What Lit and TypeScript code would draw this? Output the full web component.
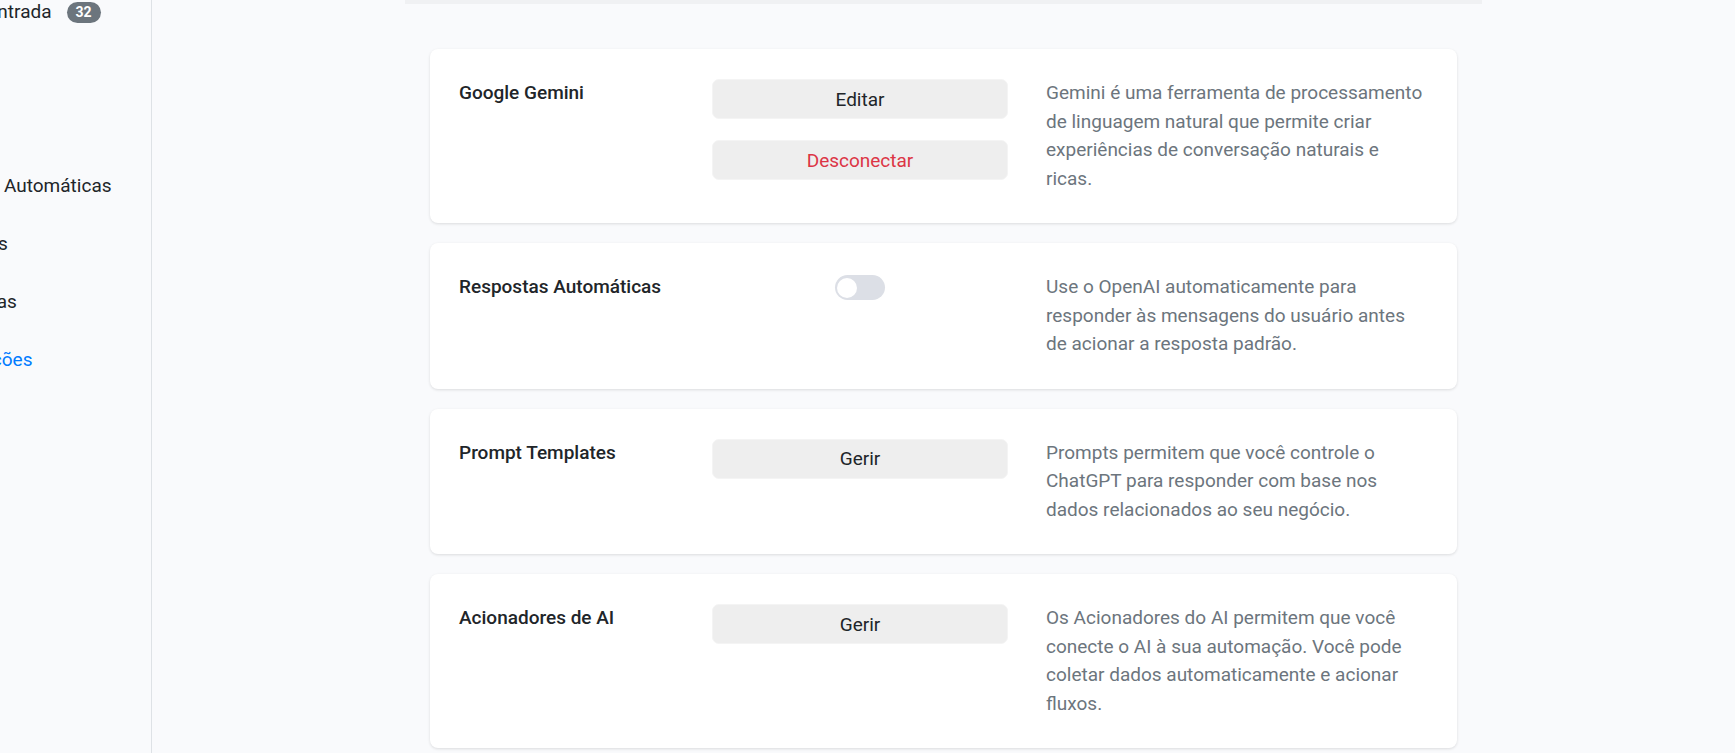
import { LitElement, html, css, nothing } from "lit";
import { customElement, property, state } from "lit/decorators.js";
import { classMap } from "lit/directives/class-map.js";

interface NavItem {
  label: string;
  badge?: number;
  active?: boolean;
}

interface Action {
  label: string;
  danger?: boolean;
}

interface Setting {
  title: string;
  text: string;
  actions?: Action[];
}

const NAV: NavItem[] = [
  { label: "Caixa de entrada", badge: 32 },
  { label: "" },
  { label: "" },
  { label: "Respostas Automáticas" },
  { label: "Sequências" },
  { label: "Ferramentas" },
  { label: "Configurações", active: true },
];

const SETTINGS: Setting[] = [
  {
    title: "Google Gemini",
    text: "Gemini é uma ferramenta de processamento de linguagem natural que permite criar experiências de conversação naturais e ricas.",
    actions: [{ label: "Editar" }, { label: "Desconectar", danger: true }],
  },
  {
    title: "Respostas Automáticas",
    text: "Use o OpenAI automaticamente para responder às mensagens do usuário antes de acionar a resposta padrão.",
  },
  {
    title: "Prompt Templates",
    text: "Prompts permitem que você controle o ChatGPT para responder com base nos dados relacionados ao seu negócio.",
    actions: [{ label: "Gerir" }],
  },
  {
    title: "Acionadores de AI",
    text: "Os Acionadores do AI permitem que você conecte o AI à sua automação. Você pode coletar dados automaticamente e acionar fluxos.",
    actions: [{ label: "Gerir" }],
  },
];

@customElement("setting-card")
export class SettingCard extends LitElement {
  @property({ attribute: false }) setting!: Setting;
  @state() private on = false;

  static styles = css`
    :host {
      display: block;
    }
    .card {
      display: grid;
      grid-template-columns: 215fr 296fr 382fr;
      column-gap: 38px;
      padding: 30px 29px;
      background: #fff;
      border-radius: 8px;
      box-shadow: 0 1px 3px rgba(0, 0, 0, 0.12);
    }
    .title,
    .text {
      margin: 0;
      font-size: inherit;
      line-height: inherit;
    }
    .title {
      font-weight: 500;
      color: #212529;
    }
    .text {
      color: #6c757d;
    }
    .actions {
      display: flex;
      flex-direction: column;
      gap: 21px;
    }
    .button {
      height: 40px;
      padding: 0 12px;
      border: 1px solid #f4f4f4;
      border-radius: 7px;
      background: #eee;
      color: #212529;
      font: inherit;
      line-height: 1;
      cursor: pointer;
    }
    .danger {
      color: #dc3545;
    }
    .switch {
      appearance: none;
      display: flex;
      align-items: center;
      align-self: center;
      width: 50px;
      height: 25px;
      margin: 2px 0;
      padding: 0 2px;
      border-radius: 13px;
      background: #dcdfe6;
      cursor: pointer;
    }
    .switch::before {
      content: "";
      width: 20px;
      height: 20px;
      border-radius: 50%;
      background: #fff;
    }
    .switch:checked {
      justify-content: flex-end;
      background: #007bff;
    }
  `;

  render() {
    const { title, text, actions } = this.setting;
    return html`
      <section class="card">
        <h2 class="title" id="title">${title}</h2>
        <div class="actions">
          ${actions
            ? actions.map(
                (a) => html`<button type="button" class=${classMap({ button: true, danger: !!a.danger })}>${a.label}</button>`
              )
            : html`<input
                class="switch"
                type="checkbox"
                role="switch"
                aria-labelledby="title"
                .checked=${this.on}
                @change=${(e: Event) => (this.on = (e.target as HTMLInputElement).checked)}
              />`}
        </div>
        <p class="text">${text}</p>
      </section>
    `;
  }
}

@customElement("app-root")
export class AppRoot extends LitElement {
  static styles = css`
    :host {
      display: flex;
      height: 100vh;
      overflow: hidden;
      background: #f9fafc;
      color: #212529;
      font: 400 19px/1.5 Roboto, sans-serif;
    }
    .sidebar {
      box-sizing: border-box;
      flex: 0 0 152px;
      overflow: hidden;
      border-right: 1px solid #dee2e6;
    }
    .list {
      margin: -17px 0 0 -90px;
      padding: 0;
      list-style: none;
    }
    .item {
      display: flex;
      height: 58px;
    }
    .link {
      display: flex;
      align-items: center;
      gap: 15px;
      color: inherit;
      white-space: nowrap;
      text-decoration: none;
    }
    .active {
      color: #007bff;
    }
    .badge {
      padding: 0 9px;
      border-radius: 11px;
      background: #6c757d;
      color: #fff;
      font-size: 14px;
      font-weight: 700;
    }
    .main {
      flex: 1;
      min-width: 0;
    }
    .page {
      max-width: 1077px;
      margin: 0 auto;
    }
    .rule {
      height: 4px;
      background: #f0f1f3;
    }
    .cards {
      display: flex;
      flex-direction: column;
      gap: 20px;
      padding: 45px 25px;
    }
  `;

  render() {
    return html`
      <nav class="sidebar">
        <ul class="list">
          ${NAV.map(
            (n) => html`<li class="item">
              ${n.label
                ? html`<a class=${classMap({ link: true, active: !!n.active })} href="#"
                    >${n.label}${n.badge ? html`<span class="badge">${n.badge}</span>` : nothing}</a
                  >`
                : nothing}
            </li>`
          )}
        </ul>
      </nav>
      <main class="main">
        <div class="page">
          <div class="rule"></div>
          <div class="cards">${SETTINGS.map((s) => html`<setting-card .setting=${s}></setting-card>`)}</div>
        </div>
      </main>
    `;
  }
}
